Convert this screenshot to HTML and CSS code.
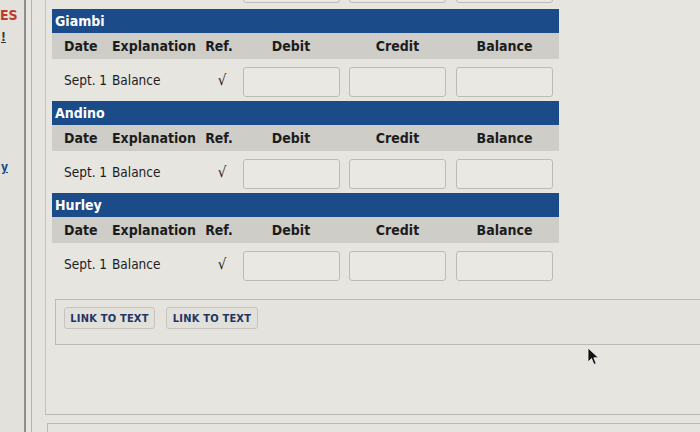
FILE: index.html
```html
<!DOCTYPE html>
<html>
<head>
<meta charset="utf-8">
<link rel="stylesheet" href="styles.css">
</head>
<body>
<div class="page">
  <aside class="side">
    <span class="s-es">ES</span>
    <span class="s-ex">!</span>
    <span class="s-y">y</span>
  </aside>
  <div class="rule"></div>
  <div class="strip"></div>
  <main class="main">
    <div class="frame">
      <div class="row prev">
        <span></span><span></span><span></span>
        <span class="cell"><span class="inp"></span></span>
        <span class="cell"><span class="inp"></span></span>
        <span class="cell"><span class="inp"></span></span>
      </div>

      <section class="ledger">
        <div class="title">Giambi</div>
        <div class="row head">
          <span>Date</span><span>Explanation</span><span class="c">Ref.</span>
          <span class="c">Debit</span><span class="c">Credit</span><span class="c">Balance</span>
        </div>
        <div class="row data">
          <span>Sept. 1</span><span>Balance</span><span class="c chk">√</span>
          <span class="cell"><span class="inp"></span></span>
          <span class="cell"><span class="inp"></span></span>
          <span class="cell"><span class="inp"></span></span>
        </div>
      </section>

      <section class="ledger">
        <div class="title">Andino</div>
        <div class="row head">
          <span>Date</span><span>Explanation</span><span class="c">Ref.</span>
          <span class="c">Debit</span><span class="c">Credit</span><span class="c">Balance</span>
        </div>
        <div class="row data">
          <span>Sept. 1</span><span>Balance</span><span class="c chk">√</span>
          <span class="cell"><span class="inp"></span></span>
          <span class="cell"><span class="inp"></span></span>
          <span class="cell"><span class="inp"></span></span>
        </div>
      </section>

      <section class="ledger">
        <div class="title">Hurley</div>
        <div class="row head">
          <span>Date</span><span>Explanation</span><span class="c">Ref.</span>
          <span class="c">Debit</span><span class="c">Credit</span><span class="c">Balance</span>
        </div>
        <div class="row data">
          <span>Sept. 1</span><span>Balance</span><span class="c chk">√</span>
          <span class="cell"><span class="inp"></span></span>
          <span class="cell"><span class="inp"></span></span>
          <span class="cell"><span class="inp"></span></span>
        </div>
      </section>

      <div class="links">
        <span class="btn">LINK TO TEXT</span>
        <span class="btn">LINK TO TEXT</span>
      </div>
    </div>
    <div class="next"></div>
  </main>
</div>
<svg class="cursor" width="14" height="20" viewBox="0 0 14 20">
  <path d="M1 1 L1 15 L4.5 11.5 L7 17.5 L9.2 16.5 L6.8 10.8 L11.5 10.8 Z" fill="#111" stroke="#f4f4f4" stroke-width="0.8"/>
</svg>
</body>
</html>
```

FILE: styles.css
```css
* { box-sizing: border-box; }
html, body { margin: 0; padding: 0; }
body {
  width: 700px;
  height: 432px;
  overflow: hidden;
  background: #e4e2dd;
  font-family: "DejaVu Sans Condensed", "DejaVu Sans", Verdana, sans-serif;
  font-stretch: condensed;
  color: #1c1c1c;
  position: relative;
}
.page {
  display: flex;
  height: 432px;
}
.side {
  width: 24px;
  display: flex;
  flex-direction: column;
  overflow: hidden;
  background: #e3e1dc;
}
.s-es {
  margin-top: 7px;
  margin-left: 0;
  color: #c0392b;
  font-weight: bold;
  font-size: 14px;
  line-height: 17px;
}
.s-ex {
  margin-top: 7px;
  margin-left: 1px;
  font-weight: bold;
  font-size: 12px;
  line-height: 12px;
  text-decoration: underline;
  color: #333;
}
.s-y {
  margin-top: 117px;
  margin-left: 1px;
  font-weight: bold;
  font-size: 12px;
  line-height: 14px;
  color: #1a4b8a;
  text-decoration: underline;
}
.rule {
  width: 2px;
  background: #8f8d89;
}
.strip {
  width: 5px;
  background: #e7e5e0;
}
.main {
  flex: 1;
  border-left: 1px solid #b3b1ac;
  background: #e6e4df;
  overflow: hidden;
}
.frame {
  display: flow-root;
  margin-left: 13px;
  height: 415px;
  border-left: 1px solid #c3c1bc;
  border-bottom: 1px solid #b9b7b2;
  padding-left: 6px;
  background: #e7e5e0;
}
.row {
  display: grid;
  grid-template-columns: 48px 88px 38px 106px 107px 107px;
  padding-left: 12px;
  width: 507px;
  align-items: center;
}
.c { text-align: center; }
.cell { display: flex; justify-content: center; }
.inp {
  display: block;
  width: 97px;
  height: 30px;
  border: 1px solid #bdbbb6;
  border-radius: 3px;
  background: #e9e8e3;
}
.prev {
  margin-top: -27px;
  height: 32px;
  align-items: start;
}
.ledger { width: 507px; }
.ledger:first-of-type { margin-top: 4px; }
.title {
  height: 24px;
  background: #1b4b88;
  color: #ffffff;
  font-weight: bold;
  font-size: 14px;
  line-height: 24px;
  padding-left: 3px;
}
.head {
  height: 26px;
  background: #cecdc8;
  font-weight: bold;
  font-size: 14px;
}
.data {
  height: 42px;
  font-size: 13.5px;
  align-items: start;
  padding-top: 8px;
}
.data > span:not(.cell) {
  line-height: 26px;
}
.chk {
  font-size: 15px;
  padding-left: 6px;
}
.links {
  margin-top: 14px;
  margin-left: 3px;
  height: 46px;
  border: 1px solid #bcbab5;
  border-right: none;
  padding: 7px 8px;
  display: flex;
  gap: 11px;
  background: #e5e3de;
}
.btn {
  display: flex;
  align-items: center;
  justify-content: center;
  width: 91px;
  height: 22px;
  border: 1px solid #c6c4bf;
  border-radius: 3px;
  background: #e1e0db;
  color: #1f3564;
  font-weight: bold;
  font-size: 11px;
  letter-spacing: 0.2px;
}
.btn + .btn { width: 92px; }
.next {
  margin-top: 8px;
  margin-left: 15px;
  height: 20px;
  border-top: 1px solid #bcbab5;
  border-left: 1px solid #bcbab5;
}
.cursor {
  position: absolute;
  left: 587px;
  top: 347px;
}
```
